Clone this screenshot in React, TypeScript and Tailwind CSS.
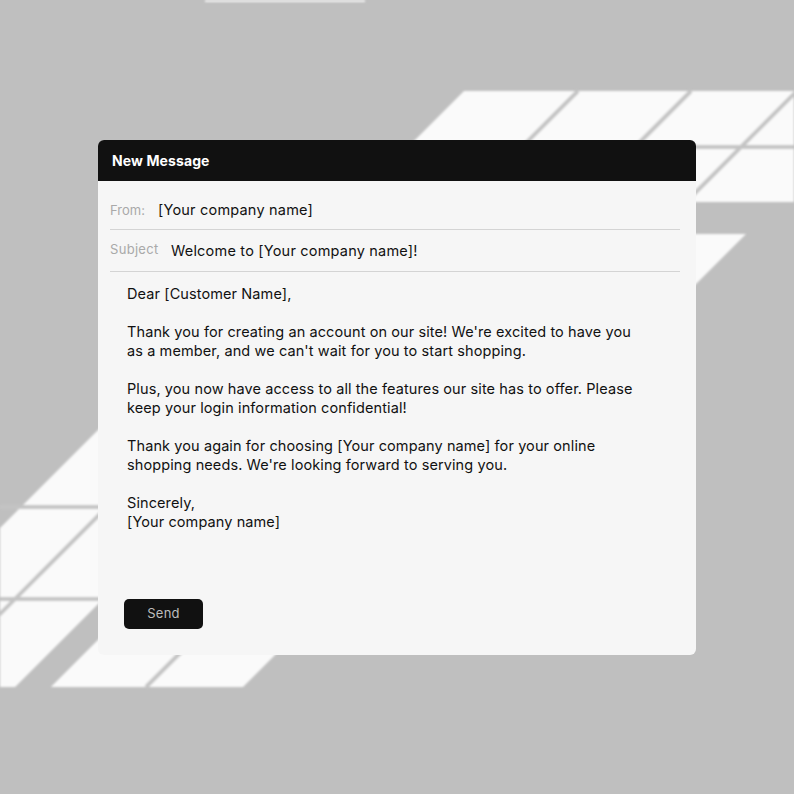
import React from "react";

const font = { fontFamily: "Inter, 'Noto Sans', sans-serif" };

function WindowLight() {
  return (
    <svg
      className="absolute inset-0"
      width="794"
      height="794"
      viewBox="0 0 794 794"
    >
      <defs>
        <filter id="soft" x="-5%" y="-5%" width="110%" height="110%">
          <feGaussianBlur stdDeviation="0.9" />
        </filter>
      </defs>
      <rect width="794" height="794" fill="#bfbfbf" />
      <g filter="url(#soft)">
        <rect x="205" y="0" width="160" height="2" fill="#f4f4f4" />
        {/* top right panes */}
        <polygon points="464,91 794,91 794,202 353,202" fill="#fafafa" />
        <polygon points="746,234 200,234 200,600 380,600" fill="#fafafa" />
        {/* bottom left panes */}
        <polygon points="128,400 530,400 243,687 0,687 0,528" fill="#fafafa" />
        <polygon points="122,580 158,580 51,687 15,687" fill="#bfbfbf" />
        {/* mullions */}
        <g stroke="#c4c4c4" strokeWidth="4">
          <line x1="578" y1="91" x2="467" y2="202" />
          <line x1="691" y1="91" x2="580" y2="202" />
          <line x1="797" y1="91" x2="686" y2="202" />
          <line x1="400" y1="147" x2="794" y2="147" />
          <line x1="0" y1="507" x2="430" y2="507" />
          <line x1="0" y1="599" x2="340" y2="599" />
          <line x1="194" y1="420" x2="-73" y2="687" />
          <line x1="233" y1="600" x2="146" y2="687" />
        </g>
      </g>
    </svg>
  );
}

const letter = [
  "Dear [Customer Name],",
  "",
  "Thank you for creating an account on our site! We're excited to have you",
  "as a member, and we can't wait for you to start shopping.",
  "",
  "Plus, you now have access to all the features our site has to offer. Please",
  "keep your login information confidential!",
  "",
  "Thank you again for choosing [Your company name] for your online",
  "shopping needs. We're looking forward to serving you.",
  "",
  "Sincerely,",
  "[Your company name]",
];

export default function App() {
  return (
    <div className="relative w-[794px] h-[794px] overflow-hidden" style={font}>
      <WindowLight />
      <div className="relative pt-[140px] pl-[98px]">
        <div className="w-[598px] h-[515px] rounded-[6px] overflow-hidden bg-[#f6f6f6] flex flex-col">
          {/* header */}
          <div className="h-[41px] bg-[#111111] flex items-center px-[14px]">
            <span className="text-white text-[14px] font-bold tracking-[0.1px]">
              New Message
            </span>
          </div>

          {/* fields */}
          <div className="ml-[12px] mr-[16px]">
            <div className="flex items-center pt-[19px] pb-[9px] border-b border-[#d4d4d4]">
              <span className="w-[48px] text-[13px] leading-[20px] text-[#a9a9a9]">
                From:
              </span>
              <span className="text-[14.5px] leading-[20px] tracking-[0.2px] text-[#111]">
                [Your company name]
              </span>
            </div>
            <div className="flex items-start pt-[11px] pb-[10px] border-b border-[#d4d4d4]">
              <span className="w-[61px] text-[13px] leading-[16px] tracking-[0.3px] text-[#a9a9a9]">
                Subject
              </span>
              <span className="text-[14.5px] leading-[20px] tracking-[0.2px] text-[#111]">
                Welcome to [Your company name]!
              </span>
            </div>
          </div>

          {/* body */}
          <div className="pl-[29px] pt-[12px] text-[14.5px] leading-[19px] tracking-[0.1px] text-[#111]">
            {letter.map((line, i) => (
              <div key={i} className="h-[19px] whitespace-nowrap">
                {line}
              </div>
            ))}
          </div>

          <div className="mt-auto pl-[26px] pb-[26px]">
            <button className="w-[79px] h-[30px] rounded-[5px] bg-[#111111] text-[13px] tracking-[0.2px] text-[#bdbdbd]">
              Send
            </button>
          </div>
        </div>
      </div>
    </div>
  );
}
